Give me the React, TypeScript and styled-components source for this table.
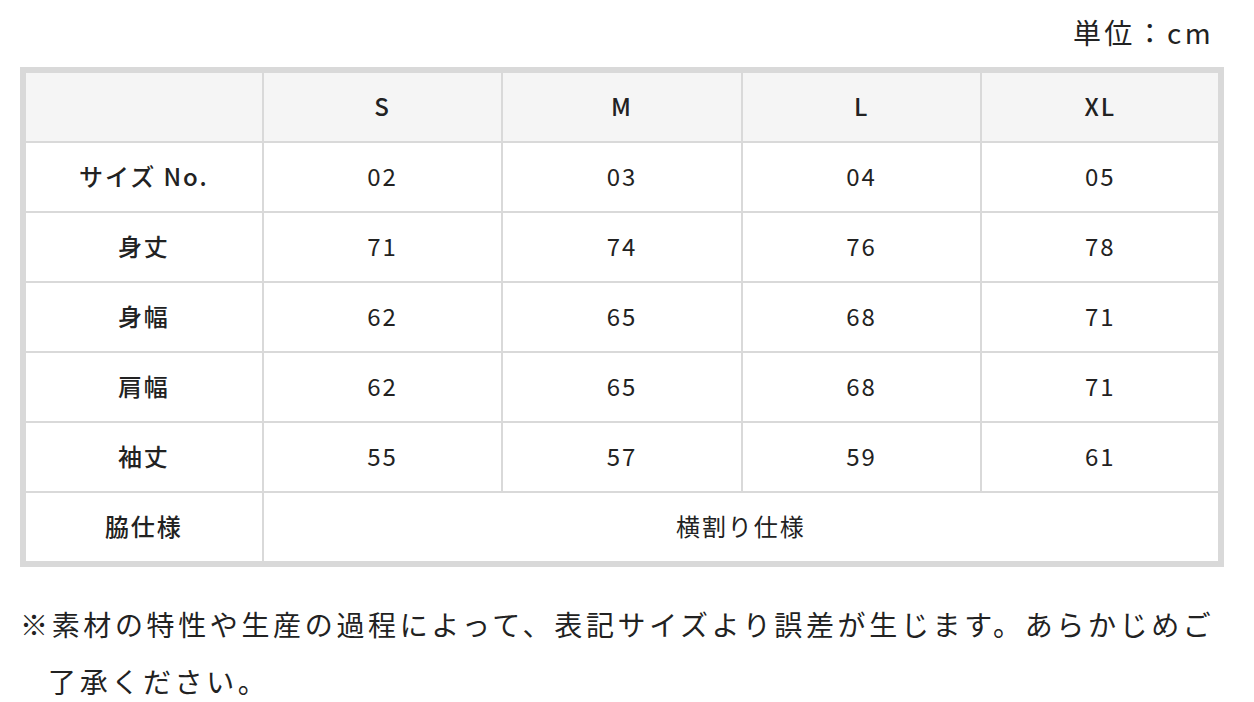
import React from 'react'
import styled, { createGlobalStyle } from 'styled-components'

const SIZES = ['S', 'M', 'L', 'XL']
const ROWS: { label: string; values: string[] }[] = [
  { label: 'サイズ No.', values: ['02', '03', '04', '05'] },
  { label: '身丈', values: ['71', '74', '76', '78'] },
  { label: '身幅', values: ['62', '65', '68', '71'] },
  { label: '肩幅', values: ['62', '65', '68', '71'] },
  { label: '袖丈', values: ['55', '57', '59', '61'] },
]

const GlobalStyle = createGlobalStyle`
  html, body {
    margin: 0;
    padding: 0;
    background: #ffffff;
  }
  body {
    font-family: 'Noto Sans CJK JP', 'Noto Sans', sans-serif;
    color: #222222;
  }
`

const Page = styled.div`
  width: 1204px;
  padding: 12px 30px 0 20px;
`

const Unit = styled.div`
  text-align: right;
  font-size: 28px;
  line-height: 40px;
  letter-spacing: 0.12em;
  padding-right: 10px;
  margin-bottom: 15px;
`

const Table = styled.table`
  width: 100%;
  border-collapse: collapse;
  table-layout: fixed;
  border: 6px solid #d9d9d9;
`

const Cell = styled.td<{ $head?: boolean; $label?: boolean }>`
  height: 64px;
  padding: 0 0 4px;
  border: 2px solid #d9d9d9;
  text-align: center;
  vertical-align: middle;
  font-size: 24px;
  letter-spacing: 0.08em;
  font-weight: ${(p) => (p.$label ? 500 : 400)};
  background: ${(p) => (p.$head ? '#f5f5f5' : '#ffffff')};
`

const Note = styled.p`
  margin: 29px 0 0;
  padding-left: 1em;
  text-indent: -1em;
  font-size: 28px;
  line-height: 57px;
  letter-spacing: 0.13em;
`

export default function App() {
  return (
    <Page>
      <GlobalStyle />
      <Unit>単位：cm</Unit>
      <Table>
        <tbody>
          <tr>
            <Cell $head />
            {SIZES.map((s) => (
              <Cell key={s} $head $label>
                {s}
              </Cell>
            ))}
          </tr>
          {ROWS.map((row) => (
            <tr key={row.label}>
              <Cell $label>{row.label}</Cell>
              {row.values.map((v, i) => (
                <Cell key={i}>{v}</Cell>
              ))}
            </tr>
          ))}
          <tr>
            <Cell $label>脇仕様</Cell>
            <Cell colSpan={4}>横割り仕様</Cell>
          </tr>
        </tbody>
      </Table>
      <Note>
        ※素材の特性や生産の過程によって、表記サイズより誤差が生じます。あらかじめご了承ください。
      </Note>
    </Page>
  )
}
